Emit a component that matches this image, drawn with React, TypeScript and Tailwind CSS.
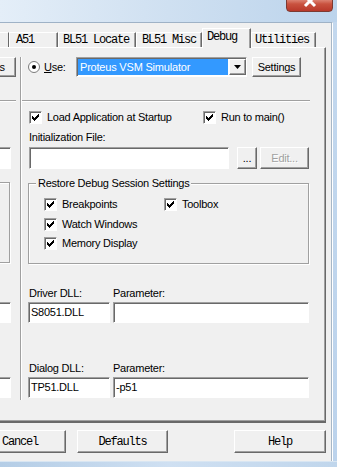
import React from "react";

const sunken =
  "border border-t-[#a0a0a0] border-l-[#a0a0a0] border-b-white border-r-white shadow-[inset_1px_1px_0_#696969]";
const raised =
  "border border-t-white border-l-white border-b-[#696969] border-r-[#696969] shadow-[inset_-1px_-1px_0_#a0a0a0] bg-[#f0f0f0]";
const mono = "font-['Liberation_Mono',monospace] text-[12px] tracking-[-1.2px] text-black";

function CheckBox() {
  return (
    <span className={`flex w-[13px] h-[13px] shrink-0 bg-white ${sunken}`}>
      <svg width="11" height="11" viewBox="0 0 11 11" shapeRendering="crispEdges">
        <rect x="2" y="4" width="1" height="3" fill="#000" />
        <rect x="3" y="5" width="1" height="3" fill="#000" />
        <rect x="4" y="6" width="1" height="3" fill="#000" />
        <rect x="5" y="5" width="1" height="3" fill="#000" />
        <rect x="6" y="4" width="1" height="3" fill="#000" />
        <rect x="7" y="3" width="1" height="3" fill="#000" />
        <rect x="8" y="2" width="1" height="3" fill="#000" />
      </svg>
    </span>
  );
}

function Check({ label, w }: { label: string; w?: string }) {
  return (
    <div className={`flex items-center h-[13px] ${w ?? ""}`}>
      <CheckBox />
      <span className="ml-[5px] leading-[13px]">{label}</span>
    </div>
  );
}

function Tab({ label, w, pl }: { label: string; w: string; pl: string }) {
  return (
    <div
      className={`${w} ${pl} h-[15px] border-t border-l border-t-white border-l-white border-r border-r-[#696969] shadow-[inset_-1px_0_0_#a0a0a0] flex items-center whitespace-nowrap ${mono}`}
    >
      {label}
    </div>
  );
}

export default function App() {
  return (
    <div className="w-[337px] h-[467px] overflow-hidden flex flex-col bg-gradient-to-b from-[#dbe8f5] via-[#c9dcef] to-[#c2d7ed] font-['Liberation_Sans',Arial,sans-serif] text-[11px] tracking-[-0.25px] text-black">
      {/* title bar */}
      <div className="h-[22px] shrink-0 relative bg-gradient-to-r from-[#e4eef8] via-[#cfe0f1] to-[#bcd4ec]">
        <div className="absolute left-[286px] top-[-4px] w-[47px] h-[16px] rounded-b-[4px] border border-[#7d3a32] bg-gradient-to-b from-[#e8a396] via-[#c9523f] to-[#b8382a] flex justify-center overflow-hidden">
          <svg width="14" height="14" viewBox="0 0 14 14" className="mt-[-2px]">
            <path d="M2 1 L12 11 M12 1 L2 11" stroke="#ffffff" strokeWidth="3" />
          </svg>
        </div>
      </div>

      <div className="flex h-[439px] shrink-0">
        {/* dialog body */}
        <div className="w-[333px] h-[439px] bg-[#f0f0f0] border-t border-t-[#9fb2c6] border-r border-r-white shadow-[inset_-1px_0_0_#a7b7c7] flex flex-col">
          {/* tabs */}
          <div className="h-[24px] flex items-end shrink-0">
            <div className="w-[9px] h-[15px] border-t border-t-white border-r border-r-[#696969]" />
            <Tab label="A51" w="w-[49px]" pl="pl-[6px]" />
            <Tab label="BL51 Locate" w="w-[78px]" pl="pl-[4px]" />
            <Tab label="BL51 Misc" w="w-[66px]" pl="pl-[5px]" />
            <div
              className={`w-[49px] h-[20px] mb-[-1px] relative z-10 bg-[#f0f0f0] border-t border-l border-t-white border-l-white border-r border-r-[#696969] shadow-[inset_-1px_0_0_#a0a0a0] pl-[4px] pb-[4px] flex items-center whitespace-nowrap ${mono}`}
            >
              Debug
            </div>
            <Tab label="Utilities" w="w-[65px]" pl="pl-[3px]" />
          </div>

          {/* panel */}
          <div className="w-[326px] h-[376px] shrink-0 border-t border-t-white border-r border-r-[#696969] border-b-2 border-b-[#696969] shadow-[inset_-1px_-1px_0_#a0a0a0] flex">
            {/* left cut column */}
            <div className="w-[20px] overflow-hidden flex flex-col shrink-0">
              <div className={`mt-[9px] h-[20px] w-[60px] ml-[-44px] shrink-0 ${raised} flex items-center justify-center`}>
                <span>Settings</span>
              </div>
              <div className="mt-[23px] h-[2px] w-[16px] border-t border-t-[#a0a0a0] border-b border-b-white shrink-0" />
              <div className={`mt-[45px] h-[22px] w-[40px] ml-[-29px] bg-white shrink-0 ${sunken}`} />
              <div className="mt-[13px] h-[81px] w-[40px] ml-[-30px] shrink-0 border border-[#a0a0a0] shadow-[inset_1px_1px_0_#fff,1px_1px_0_#fff]" />
              <div className={`mt-[39px] h-[21px] w-[40px] ml-[-29px] bg-white shrink-0 ${sunken}`} />
              <div className={`mt-[54px] h-[21px] w-[40px] ml-[-29px] bg-white shrink-0 ${sunken}`} />
            </div>

            {/* vertical separator */}
            <div className="mt-[9px] h-[343px] w-[2px] border-l border-l-[#a0a0a0] border-r border-r-white shrink-0" />

            {/* right column */}
            <div className="flex flex-col flex-1">
              {/* row 1 */}
              <div className="mt-[9px] h-[20px] flex items-center shrink-0">
                <svg width="12" height="12" viewBox="0 0 12 12" className="ml-[6px] shrink-0">
                  <circle cx="6" cy="6" r="5.5" fill="#ffffff" stroke="#7a7a7a" />
                  <circle cx="6" cy="6" r="2" fill="#000" />
                </svg>
                <span className="ml-[4px] w-[32px]">
                  <span className="underline">U</span>se:
                </span>
                <div className={`w-[171px] h-[20px] bg-white ${sunken} flex items-center`}>
                  <div className="ml-[1px] h-[16px] w-[150px] bg-[#3399ff] text-white flex items-center pl-[2px] whitespace-nowrap tracking-[-0.2px]">
                    Proteus VSM Simulator
                  </div>
                  <div className={`ml-auto w-[17px] h-[16px] ${raised} flex items-center justify-center`}>
                    <svg width="7" height="4" viewBox="0 0 7 4">
                      <path d="M0 0 H7 L3.5 4 Z" fill="#000" />
                    </svg>
                  </div>
                </div>
                <div className={`ml-[5px] w-[49px] h-[20px] ${raised} flex items-center justify-center`}>
                  Settings
                </div>
              </div>

              <div className="mt-[23px] h-[2px] w-[288px] border-t border-t-[#a0a0a0] border-b border-b-white shrink-0" />

              {/* load app row */}
              <div className="mt-[9px] flex shrink-0 pl-[7px]">
                <Check label="Load Application at Startup" w="w-[174px]" />
                <Check label="Run to main()" />
              </div>

              <div className="mt-[7px] h-[13px] leading-[13px] pl-[7px] shrink-0">Initialization File:</div>

              <div className="mt-[3px] h-[22px] flex shrink-0 pl-[7px]">
                <div className={`w-[200px] h-[22px] bg-white ${sunken}`} />
                <div className={`ml-[8px] w-[20px] h-[22px] ${raised} flex items-center justify-center`}>...</div>
                <div className={`ml-[3px] w-[49px] h-[22px] ${raised} flex items-center justify-center text-[#a0a0a0] [text-shadow:1px_1px_0_#fff]`}>
                  Edit...
                </div>
              </div>

              {/* group box */}
              <div className="mt-[14px] ml-[6px] w-[281px] h-[81px] shrink-0 relative border border-[#a0a0a0] shadow-[inset_1px_1px_0_#fff,1px_1px_0_#fff] flex flex-col pl-[15px]">
                <span className="absolute left-[7px] top-[-7px] h-[13px] leading-[13px] px-[2px] bg-[#f0f0f0]">
                  Restore Debug Session Settings
                </span>
                <div className="mt-[14px] flex">
                  <Check label="Breakpoints" w="w-[120px]" />
                  <Check label="Toolbox" />
                </div>
                <div className="mt-[7px]">
                  <Check label="Watch Windows" />
                </div>
                <div className="mt-[6px]">
                  <Check label="Memory Display" />
                </div>
              </div>

              {/* driver dll */}
              <div className="mt-[23px] h-[13px] leading-[13px] flex pl-[7px] shrink-0">
                <span className="w-[84px]">Driver DLL:</span>
                <span>Parameter:</span>
              </div>
              <div className="mt-[2px] h-[21px] flex pl-[6px] shrink-0">
                <div className={`w-[82px] h-[21px] bg-white ${sunken} flex items-center pl-[2px]`}>S8051.DLL</div>
                <div className={`ml-[3px] w-[196px] h-[21px] bg-white ${sunken}`} />
              </div>

              {/* dialog dll */}
              <div className="mt-[39px] h-[13px] leading-[13px] flex pl-[7px] shrink-0">
                <span className="w-[84px]">Dialog DLL:</span>
                <span>Parameter:</span>
              </div>
              <div className="mt-[2px] h-[21px] flex pl-[6px] shrink-0">
                <div className={`w-[82px] h-[21px] bg-white ${sunken} flex items-center pl-[2px]`}>TP51.DLL</div>
                <div className={`ml-[3px] w-[196px] h-[21px] bg-white ${sunken} flex items-center pl-[2px]`}>-p51</div>
              </div>
            </div>
          </div>

          {/* bottom buttons */}
          <div className="mt-[7px] h-[23px] flex shrink-0">
            <div className={`ml-[-26px] w-[92px] h-[23px] ${raised} flex items-center justify-center ${mono}`}>Cancel</div>
            <div className={`ml-[11px] w-[91px] h-[23px] ${raised} flex items-center justify-center ${mono}`}>Defaults</div>
            <div className={`ml-[66px] w-[92px] h-[23px] ${raised} flex items-center justify-center ${mono}`}>Help</div>
          </div>
        </div>
        {/* right frame */}
        <div className="flex-1 bg-gradient-to-b from-[#c3d8ee] to-[#bcd3ec]" />
      </div>

      {/* bottom frame */}
      <div className="flex-1 bg-gradient-to-r from-[#b4cde6] via-[#cfe0f2] to-[#c0d6ec] border-t border-t-[#d9e6f2]" />
    </div>
  );
}
